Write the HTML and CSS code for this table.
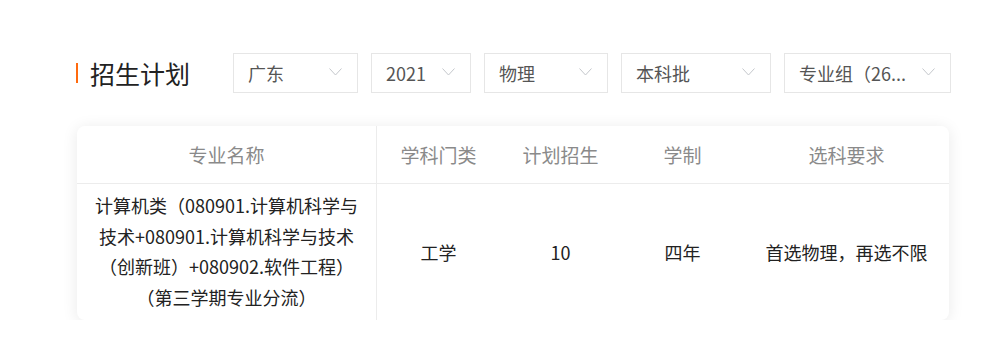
FILE: index.html
```html
<!DOCTYPE html>
<html lang="zh-CN">
<head>
<meta charset="utf-8">
<title>招生计划</title>
<link rel="stylesheet" href="styles.css">
</head>
<body>
<div class="page">
  <div class="toolbar">
    <h2 class="title"><span class="title-bar"></span>招生计划</h2>
    <div class="selects">
      <div class="select w125"><span class="select-text">广东</span><svg class="arrow" width="13" height="8" viewBox="0 0 13 8"><polyline points="0.5,0.5 6.5,7 12.5,0.5" fill="none" stroke="#c4c7cc" stroke-width="1"/></svg></div>
      <div class="select w100"><span class="select-text">2021</span><svg class="arrow" width="13" height="8" viewBox="0 0 13 8"><polyline points="0.5,0.5 6.5,7 12.5,0.5" fill="none" stroke="#c4c7cc" stroke-width="1"/></svg></div>
      <div class="select w124"><span class="select-text">物理</span><svg class="arrow" width="13" height="8" viewBox="0 0 13 8"><polyline points="0.5,0.5 6.5,7 12.5,0.5" fill="none" stroke="#c4c7cc" stroke-width="1"/></svg></div>
      <div class="select w150"><span class="select-text">本科批</span><svg class="arrow" width="13" height="8" viewBox="0 0 13 8"><polyline points="0.5,0.5 6.5,7 12.5,0.5" fill="none" stroke="#c4c7cc" stroke-width="1"/></svg></div>
      <div class="select w167"><span class="select-text">专业组（26...</span><svg class="arrow" width="13" height="8" viewBox="0 0 13 8"><polyline points="0.5,0.5 6.5,7 12.5,0.5" fill="none" stroke="#c4c7cc" stroke-width="1"/></svg></div>
    </div>
  </div>

  <div class="card">
    <div class="row head">
      <div class="cell first">专业名称</div>
      <div class="cell">学科门类</div>
      <div class="cell">计划招生</div>
      <div class="cell">学制</div>
      <div class="cell">选科要求</div>
    </div>
    <div class="row body-row">
      <div class="cell first major">计算机类（080901.计算机科学与技术+080901.计算机科学与技术（创新班）+080902.软件工程）（第三学期专业分流）</div>
      <div class="cell">工学</div>
      <div class="cell">10</div>
      <div class="cell">四年</div>
      <div class="cell">首选物理，再选不限</div>
    </div>
  </div>
</div>
</body>
</html>
```

FILE: styles.css
```css
* { box-sizing: border-box; }

html, body {
  margin: 0;
  padding: 0;
  background: #fff;
}

body {
  font-family: "Noto Sans CJK SC", "Noto Sans", sans-serif;
  color: #333;
}

.page {
  padding: 53px 0 0 76px;
}

.toolbar {
  display: flex;
  align-items: center;
  height: 40px;
}

.title {
  display: flex;
  align-items: center;
  margin: 0 43px 0 0;
  font-size: 25px;
  font-weight: 400;
  color: #222;
  line-height: 1;
  width: 114px;
  flex: none;
}

.title-bar {
  display: inline-block;
  width: 2px;
  height: 20px;
  background: #ff6a0e;
  margin-right: 12px;
}

.selects {
  display: flex;
  gap: 13px;
}

.select {
  height: 40px;
  border: 1px solid #e6e6e6;
  display: flex;
  align-items: center;
  justify-content: space-between;
  padding: 0 15px 0 14px;
  font-size: 18px;
  color: #555;
  background: #fff;
}

.select-text {
  white-space: nowrap;
  overflow: hidden;
}

.arrow { flex: none; margin-top: -2px; }

.w100 { width: 100px; }
.w124 { width: 124px; }
.w125 { width: 125px; }
.w150 { width: 150px; }
.w167 { width: 167px; }

.card {
  margin: 33px 0 0 1px;
  width: 872px;
  background: #fff;
  border-radius: 8px;
  box-shadow: 0 2px 16px rgba(0, 0, 0, 0.09);
  overflow: hidden;
}

.row {
  display: grid;
  grid-template-columns: 300px 123px 121px 123px 1fr;
}

.head {
  height: 58px;
  border-bottom: 1px solid #ececec;
  font-size: 19px;
  color: #8a8a8a;
}

.cell {
  display: flex;
  align-items: center;
  justify-content: center;
  text-align: center;
}

.first {
  border-right: 1px solid #ececec;
}

.body-row {
  font-size: 18px;
  color: #222;
}

.major {
  padding: 6px 16px 8px;
  line-height: 30.5px;
}
```
